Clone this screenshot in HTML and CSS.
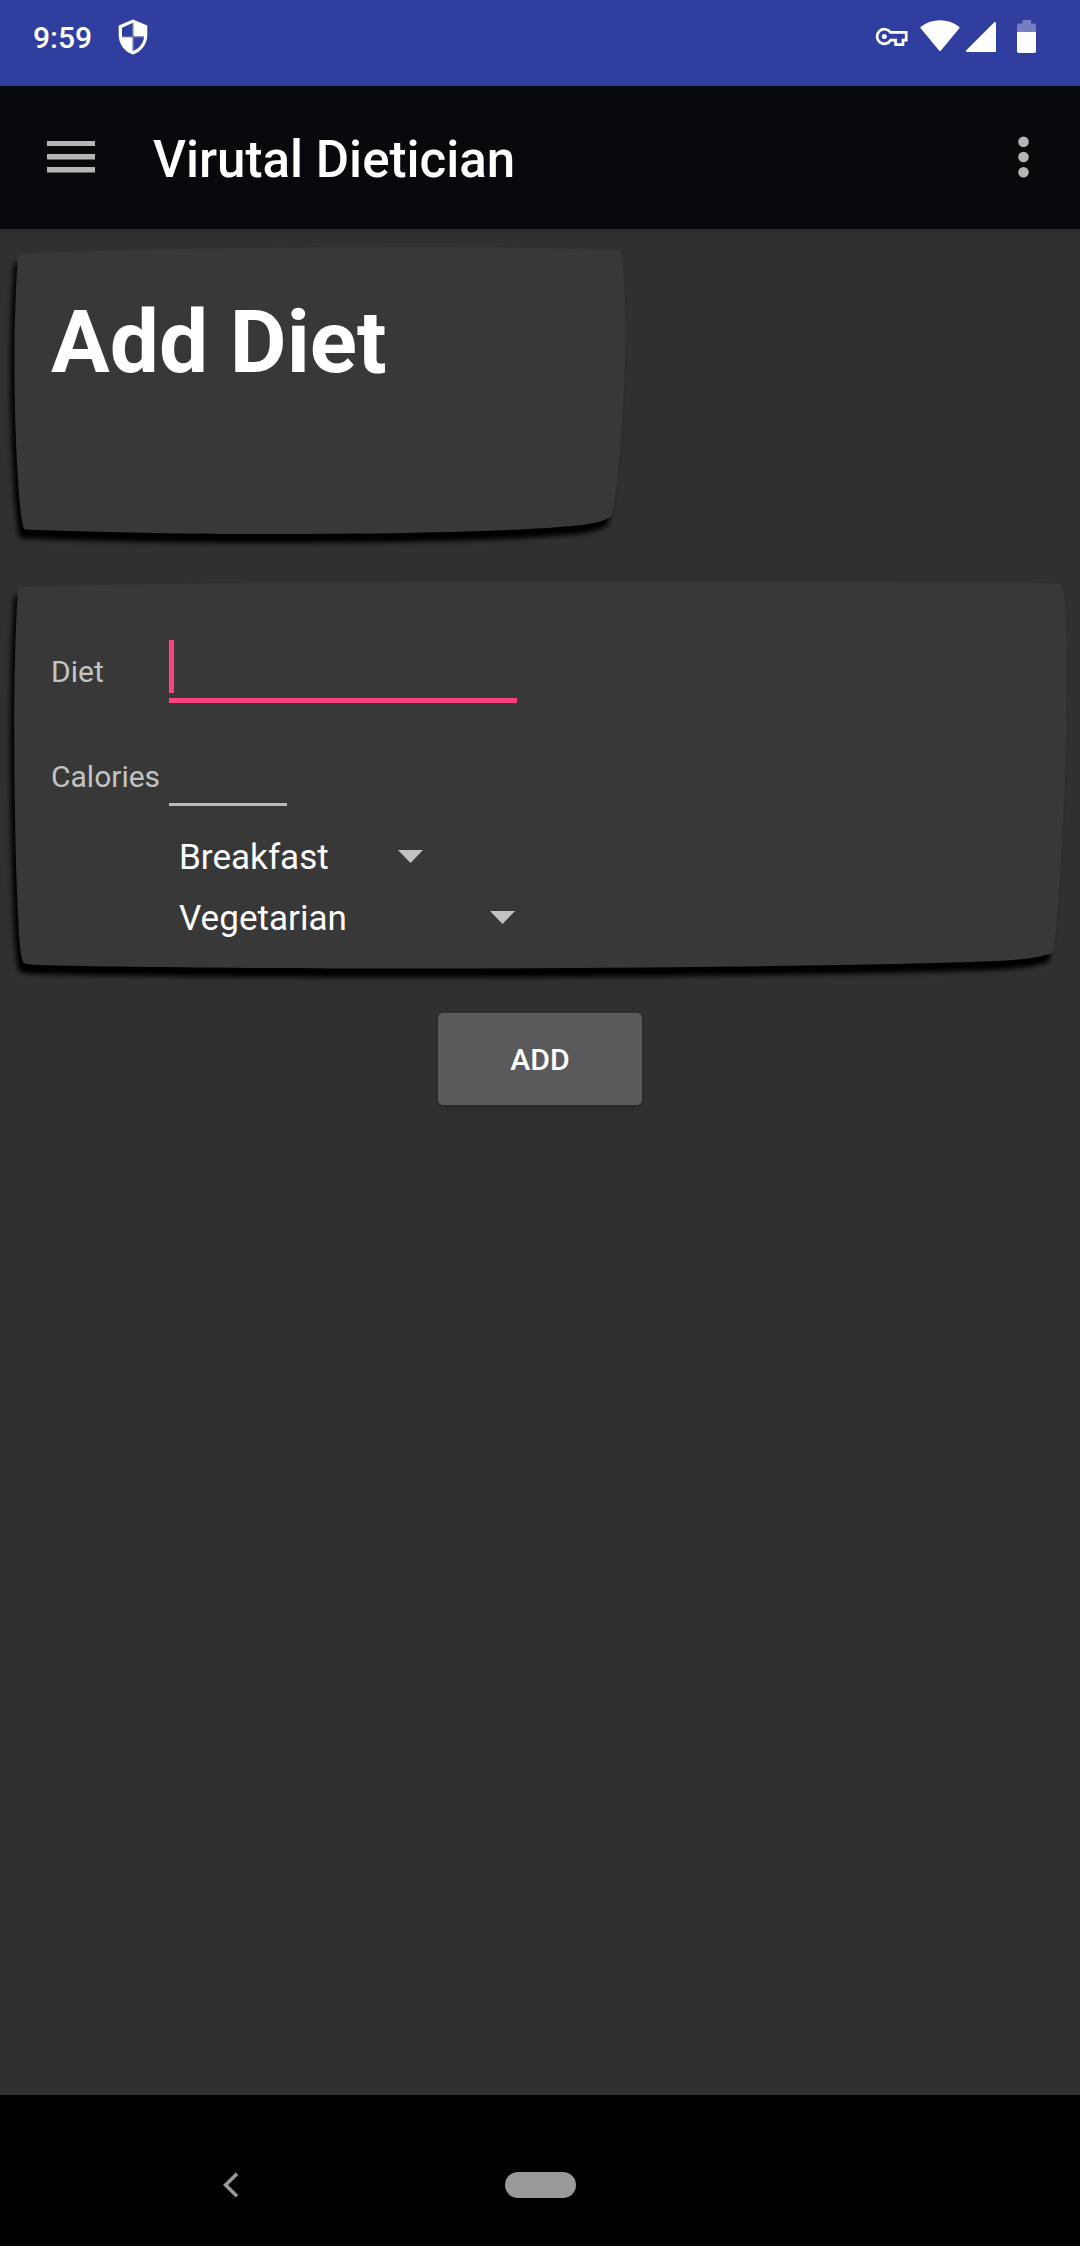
FILE: index.html
```html
<!DOCTYPE html>
<html lang="en">
<head>
<meta charset="utf-8">
<title>Virutal Dietician</title>
<link rel="stylesheet" href="styles.css">
</head>
<body>
<div class="screen">
  <header class="status">
    <span class="clock">9:59</span>
    <svg class="shield" viewBox="0 0 30 36" width="30" height="36">
      <path fill="#fff" fill-rule="evenodd" d="M15 .5 29.3 6.6V16c0 9-6 17-14.3 19.5C6.700 33 .7 25 .7 16V6.600zM14.600 4.100 4 8.700V17.400H14.600zM15.400 18.200V31.800C21.500 29.500 25.300 24 26 18.200z"/>
      <path stroke="#303f9f" stroke-width=".8" d="M15 4v28M4 17.800h22"/>
    </svg>
    <svg class="indicators" viewBox="870 14 172 44" width="172" height="44">
      <path fill="none" stroke="#fff" stroke-width="2.700" d="M890.300 32.300H906.200V40.200H903V44.700H895.600V40.200H890.600A7.300 7.300 0 1 1 890.300 32.300z"/>
      <circle cx="884.300" cy="36.500" r="2.500" fill="#fff"/>
      <path fill="#fff" stroke="#fff" stroke-width="2" stroke-linejoin="round" d="M921.400 27.500Q930 21.200 940 21.200T958.600 27.500L940 50z"/>
      <path fill="#fff" stroke="#fff" stroke-width="2" stroke-linejoin="round" d="M995 23v28h-28z"/>
      <path fill="#757fbf" d="M1022.500 20h8.500v3.500h3a2 2 0 0 1 2 2V32h-19v-6.500a2 2 0 0 1 2-2h3.500z"/>
      <path fill="#fff" d="M1017 32h19v19a2 2 0 0 1-2 2h-15a2 2 0 0 1-2-2z"/>
    </svg>
  </header>
  <nav class="toolbar">
    <svg class="menu" viewBox="0 0 48 32" width="48" height="32" fill="#b5b5b6"><path d="M0 0h48v5H0zM0 13h48v5.500H0zM0 26h48v5.600H0z"/></svg>
    <div class="app-name">Virutal Dietician</div>
    <svg class="more" viewBox="0 0 12 42" width="12" height="42" fill="#b5b5b6"><circle cx="5.500" cy="5.800" r="5.300"/><circle cx="5.500" cy="21" r="5.300"/><circle cx="5.500" cy="36.200" r="5.300"/></svg>
  </nav>
  <main class="content">
    <section class="card heading">
      <svg class="paper" viewBox="0 240 1080 310" width="1080" height="310">
        <path d="M19 254.500C90 249 280 247 430 247C500 247 560 248 618 250C621 250 622 257 623 265C628 330 624 430 616 490Q613 513 612 515Q609 521 582 525C500 534 300 535 180 533.500C110 532 60 531 25 529.500Q23 529 21 515C14 450 12 330 18 257Q18 254.600 19 254.500z"/>
      </svg>
      <h1>Add Diet</h1>
    </section>
    <section class="card form">
      <svg class="paper" viewBox="0 575 1080 410" width="1080" height="410">
        <path d="M19 587C150 583 400 581 700 581.500C850 581.500 980 582 1059 583.500Q1062 584 1063.500 592C1068 620 1067 680 1066 740C1064 820 1060 890 1055.500 935Q1054 952 1052 953Q1035 960 985 961.500C850 966 600 969 380 968.500C230 968 100 967 40 965Q24 964.500 23 962Q20 956 18.500 925C14 840 12 670 18 590Q18 587 19 587z"/>
      </svg>
      <div class="row">
        <label>Diet</label>
        <div class="field focused"><span class="caret"></span></div>
      </div>
      <div class="row calories">
        <label>Calories</label>
        <div class="field number"></div>
      </div>
      <div class="spinner meal"><span>Breakfast</span><i class="arrow"></i></div>
      <div class="spinner kind"><span>Vegetarian</span><i class="arrow"></i></div>
    </section>
    <button class="add" type="button">ADD</button>
  </main>
  <footer class="system-nav">
    <svg viewBox="0 0 16 26" width="16" height="26"><path fill="none" stroke="#999" stroke-width="3.600" d="M14 1.700 2.600 13 14 24.300"/></svg>
    <span class="home"></span>
  </footer>
</div>
</body>
</html>
```
FILE: styles.css
```css
* { box-sizing: border-box; }
body { margin: 0; background: #303030; font-family: Roboto, "Noto Sans", sans-serif; color: #fff; }
.screen { display: flex; flex-direction: column; width: 1080px; height: 2246px; overflow: hidden; }

.status { display: flex; align-items: flex-start; height: 86px; padding: 14px 38px 0 33px; background: linear-gradient(#303f9f 80px, #2d3b94); }
.clock { width: 85px; font-size: 30px; font-weight: 500; line-height: 48px; }
.shield { margin-top: 5px; }
.indicators { margin-left: auto; }

.toolbar { display: flex; align-items: center; height: 143px; padding: 0 50px 0 47px; background: #08090d; }
.menu { margin-bottom: 1px; }
.more { margin-bottom: 1px; }
.app-name { flex: 1; padding-left: 58px; font-size: 51.1px; font-weight: 500; line-height: 60px; padding-top: 4px; }

.content { flex: 1; display: flex; flex-direction: column; align-items: center; padding-top: 11px; background: linear-gradient(#2c2c2c, #303030 14px); }
.card { position: relative; width: 1080px; }
.paper { position: absolute; left: 0; top: 0; overflow: visible; fill: #383838; filter: drop-shadow(-4px 9px 2.5px #000); }
.heading { height: 335px; padding: 51px 0 0 51px; }
.heading h1 { position: relative; margin: 0; font-size: 87.4px; font-weight: 700; line-height: 102px; }
.form { height: 438px; padding: 65px 0 0 51px; }
.row { position: relative; display: flex; align-items: center; height: 63px; }
label { width: 118px; font-size: 30px; line-height: 40px; color: #c3c3c3; }
.field { display: flex; align-self: stretch; }
.focused { width: 348px; border-bottom: 5px solid #ff4081; }
.caret { width: 5px; height: 53px; background: #ff4081; }
.calories { height: 64px; margin: 42px 0 17px; }
.number { width: 118px; margin-bottom: 3px; border-bottom: 3px solid #bcbcbc; }
.spinner { position: relative; display: flex; align-items: center; justify-content: space-between; height: 61px; margin-left: 128px; font-size: 35.1px; line-height: 60px; }
.meal { width: 244px; }
.kind { width: 336px; }
.arrow { width: 25px; height: 13px; background: #c3c3c3; clip-path: polygon(0 0, 100% 0, 50% 100%); }
.add { width: 204px; height: 92px; margin-top: 0; padding: 2px 0 0; border: 0; border-radius: 5px; background: #5a5a5c; box-shadow: 0 2px 5px rgba(0, 0, 0, .25); color: #fff; font: 500 30.2px/40px Roboto, sans-serif; }

.system-nav { display: flex; align-items: center; height: 151px; padding: 29px 0 0 223px; background: #000; }
.home { width: 71px; height: 26px; margin-left: 266px; border-radius: 13px; background: #999; }
```
